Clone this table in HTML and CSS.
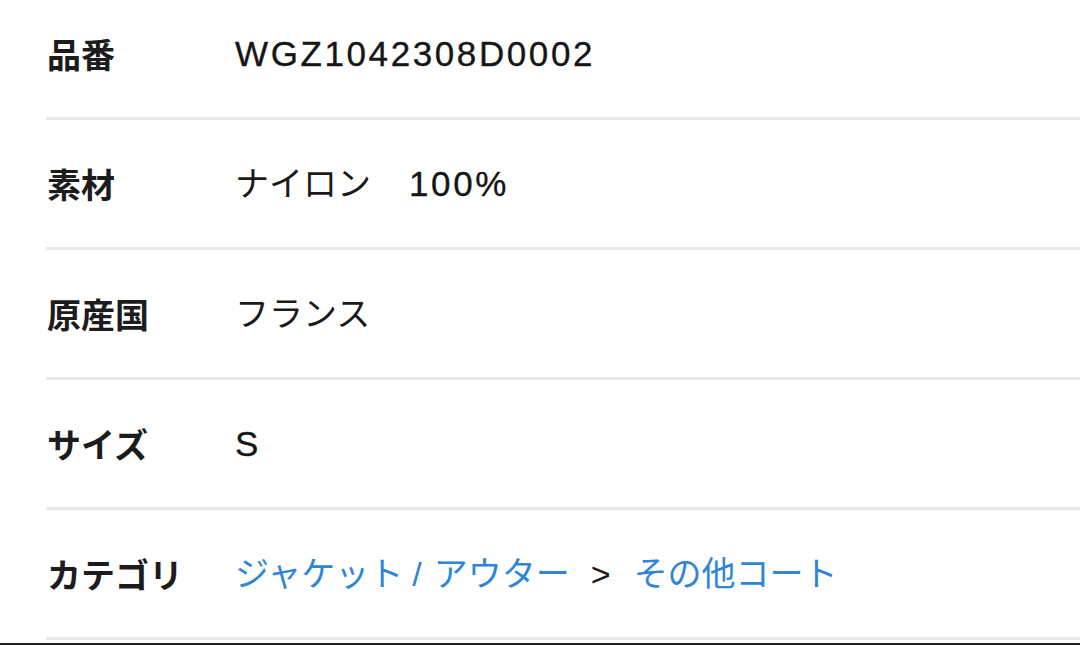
FILE: index.html
```html
<!DOCTYPE html>
<html lang="ja">
<head>
<meta charset="utf-8">
<link rel="stylesheet" href="styles.css">
</head>
<body>
<div class="spec">
  <div class="row">
    <div class="label">品番</div>
    <div class="value"><span class="latin">WGZ1042308D0002</span></div>
  </div>
  <div class="row">
    <div class="label">素材</div>
    <div class="value">ナイロン　<span class="latin pct">100%</span></div>
  </div>
  <div class="row">
    <div class="label">原産国</div>
    <div class="value">フランス</div>
  </div>
  <div class="row">
    <div class="label">サイズ</div>
    <div class="value"><span class="latin">S</span></div>
  </div>
  <div class="row">
    <div class="label">カテゴリ</div>
    <div class="value"><a class="link" href="#">ジャケット<span class="slash">/</span>アウター</a><span class="sep">&gt;</span><a class="link" href="#">その他コート</a></div>
  </div>
</div>
<div class="bottom-bar"></div>
</body>
</html>
```

FILE: styles.css
```css
html, body {
  margin: 0;
  padding: 0;
  background: #ffffff;
}

body {
  width: 1080px;
  height: 645px;
  overflow: hidden;
  font-family: "Liberation Sans", "Noto Sans CJK JP", sans-serif;
  color: #1e1e1e;
}

.spec {
  margin-top: -10px;
  margin-left: 46px;
  display: flex;
  flex-direction: column;
}

.row {
  height: 127px;
  border-bottom: 3px solid #e8e8e8;
  display: flex;
  align-items: center;
}

.label {
  width: 189px;
  padding-left: 1px;
  box-sizing: border-box;
  font-family: "Noto Sans CJK JP", sans-serif;
  font-weight: 700;
  font-size: 34px;
  color: #1c1c1c;
  line-height: 1;
}

.value {
  font-family: "Liberation Sans", "Noto Sans CJK JP", sans-serif;
  font-size: 34px;
  line-height: 1;
  color: #1a1a1a;
  white-space: nowrap;
}

.latin {
  font-size: 35px;
  letter-spacing: 2.6px;
  color: #161616;
  -webkit-text-stroke: 0.35px #161616;
}

.pct {
  margin-left: 4px;
}

.link {
  color: #2f86d6;
  text-decoration: none;
}

.slash {
  margin: 0 12px 0 9px;
}

.sep {
  display: inline-block;
  color: #1a1a1a;
  margin: 0 23px 0 21px;
}

.bottom-bar {
  margin-top: 3px;
  height: 2px;
  background: #222222;
}
```
